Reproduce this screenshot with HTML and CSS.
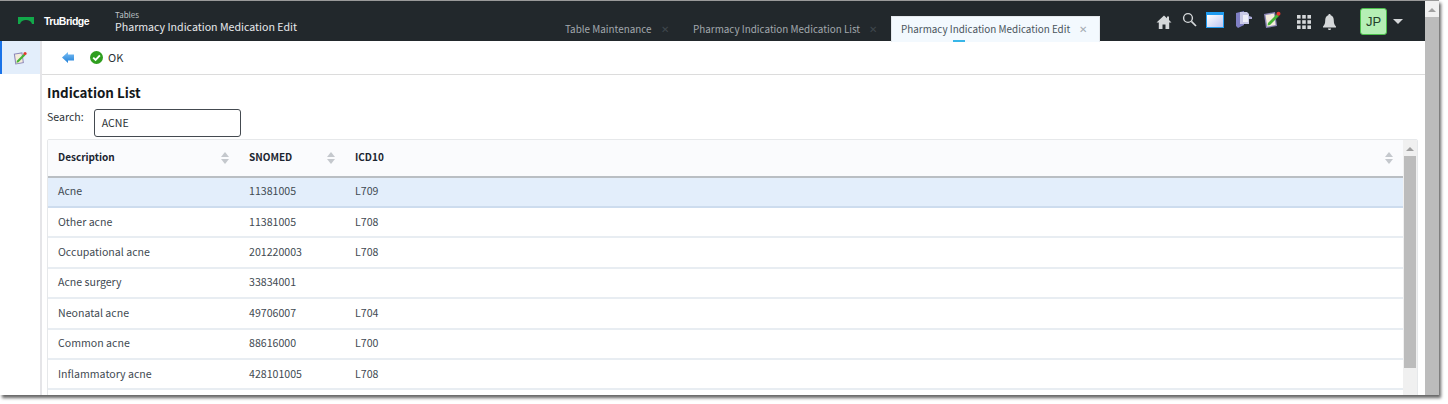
FILE: index.html
```html
<!DOCTYPE html>
<html lang="en">
<head>
<meta charset="utf-8">
<title>Pharmacy Indication Medication Edit</title>
<link rel="stylesheet" href="styles.css">
</head>
<body>
<div class="window">
  <div class="app">
    <header class="topbar">
      <div class="brand">
        <svg class="brand-mark" width="16" height="8" viewBox="0 0 16 8"><path d="M0 0H16V7H14C13 4 11 3 8 3S3 4 2 7H0Z" fill="#12a84a"/></svg>
        <span class="brand-name">TruBridge</span>
      </div>
      <div class="title">
        <div class="title-small">Tables</div>
        <div class="title-main">Pharmacy Indication Medication Edit</div>
      </div>
      <nav class="tabs">
        <div class="tab tab-first"><span>Table Maintenance</span><span class="tab-x">✕</span></div>
        <div class="tab tab-second"><span>Pharmacy Indication Medication List</span><span class="tab-x">✕</span></div>
        <div class="tab tab-active"><span>Pharmacy Indication Medication Edit</span><span class="tab-x">✕</span><i class="tab-mark"></i></div>
      </nav>
      <div class="tools">
        <svg class="ic-home" width="16" height="14" viewBox="0 0 16 14"><path d="M8 0.5L0.5 7.5H2.8V14H6.5V9.5H9.5V14H13.2V7.5H15.5L13 5.1V1.5H11V3.3Z" fill="#d5d8da"/></svg>
        <svg class="ic-search" width="15" height="15" viewBox="0 0 15 15"><circle cx="6" cy="6" r="4.4" fill="none" stroke="#d5d8da" stroke-width="1.4"/><path d="M9.4 9.4L14 14" stroke="#d5d8da" stroke-width="1.7"/></svg>
        <svg class="ic-window" width="18" height="16" viewBox="0 0 18 16"><defs><linearGradient id="wg" x1="0" y1="0" x2="1" y2="1"><stop offset="0" stop-color="#fff"/><stop offset="1" stop-color="#bcc6f2"/></linearGradient></defs><rect width="18" height="16" fill="#1f9bf0"/><rect x="1" y="3" width="16" height="12" fill="url(#wg)"/></svg>
        <svg class="ic-docs" width="18" height="17" viewBox="0 0 18 17"><path d="M1 2L9 0V14L3 17L1 15Z" fill="#7f7fc4"/><path d="M5 1H12L14 3V13H5Z" fill="#c9c9e6"/><path d="M8 4H13V11H8Z" fill="#eeeef8"/><path d="M14 5L17 6V8L14 8Z" fill="#a9a9d6"/></svg>
        <svg class="ic-edit" width="18" height="17" viewBox="0 0 18 17"><use href="#edit-shape"/></svg>
        <svg class="ic-grid" width="14" height="14" viewBox="0 0 14 14" fill="#d5d8da"><rect width="3.6" height="3.6"/><rect x="5.2" width="3.6" height="3.6"/><rect x="10.4" width="3.6" height="3.6"/><rect y="5.2" width="3.6" height="3.6"/><rect x="5.2" y="5.2" width="3.6" height="3.6"/><rect x="10.4" y="5.2" width="3.6" height="3.6"/><rect y="10.4" width="3.6" height="3.6"/><rect x="5.2" y="10.4" width="3.6" height="3.6"/><rect x="10.4" y="10.4" width="3.6" height="3.6"/></svg>
        <svg class="ic-bell" width="13" height="16" viewBox="0 0 13 16"><path d="M6.5 0C7.3 0 7.7 .6 7.7 1.3C10 2 10.8 4 10.8 6.5C10.8 9.5 11.5 11 13 12.5V13.5H0V12.5C1.5 11 2.2 9.5 2.2 6.5C2.2 4 3 2 5.3 1.3C5.3 .6 5.7 0 6.5 0Z" fill="#d5d8da"/><path d="M5 14.4H8C8 15.4 7.3 16 6.5 16S5 15.4 5 14.4Z" fill="#d5d8da"/></svg>
        <div class="avatar">JP</div>
        <svg class="ic-caret" width="10" height="5" viewBox="0 0 10 5"><path d="M0 0H10L5 5Z" fill="#d5d8da"/></svg>
      </div>
    </header>
    <div class="body">
      <aside class="sidebar">
        <div class="side-item">
          <svg width="14" height="14" viewBox="0 0 18 17"><defs><g id="edit-shape"><path d="M1 3L12 1L14 15L3 17Z" fill="#8c86b8"/><path d="M2.5 4L11 2.6L12.6 14L4.2 15.6Z" fill="#f4ecdc"/><path d="M5 12L14 3L16 5L7 14L4.5 14.5Z" fill="#46b336"/><circle cx="15.5" cy="2.8" r="2" fill="#e2372c"/></g></defs><use href="#edit-shape"/></svg>
        </div>
      </aside>
      <main class="main">
        <div class="toolbar">
          <svg class="ic-back" width="12" height="11" viewBox="0 0 12 11"><defs><linearGradient id="bg" x1="0" y1="0" x2="0" y2="1"><stop offset="0" stop-color="#7cc0f5"/><stop offset="1" stop-color="#1f7fd8"/></linearGradient></defs><path d="M0 5.5L6 0V2.5H12V8.5H6V11Z" fill="url(#bg)"/></svg>
          <svg class="ic-ok" width="13" height="13" viewBox="0 0 13 13"><circle cx="6.5" cy="6.5" r="6.5" fill="#2f9e1f"/><path d="M3.2 6.6L5.6 9L9.9 4.4" fill="none" stroke="#fff" stroke-width="1.9"/></svg>
          <span class="ok-label">OK</span>
        </div>
        <div class="content">
          <h1 class="heading">Indication List</h1>
          <div class="search">
            <label class="search-label">Search:</label>
            <div class="search-box">ACNE</div>
          </div>
          <div class="table-wrap">
            <div class="table">
              <div class="row head">
                <div class="cell">Description<span class="sort"></span></div>
                <div class="cell">SNOMED<span class="sort"></span></div>
                <div class="cell">ICD10<span class="sort"></span></div>
              </div>
              <div class="row selected"><div class="cell">Acne</div><div class="cell">11381005</div><div class="cell">L709</div></div>
              <div class="row"><div class="cell">Other acne</div><div class="cell">11381005</div><div class="cell">L708</div></div>
              <div class="row"><div class="cell">Occupational acne</div><div class="cell">201220003</div><div class="cell">L708</div></div>
              <div class="row"><div class="cell">Acne surgery</div><div class="cell">33834001</div><div class="cell"></div></div>
              <div class="row"><div class="cell">Neonatal acne</div><div class="cell">49706007</div><div class="cell">L704</div></div>
              <div class="row"><div class="cell">Common acne</div><div class="cell">88616000</div><div class="cell">L700</div></div>
              <div class="row"><div class="cell">Inflammatory acne</div><div class="cell">428101005</div><div class="cell">L708</div></div>
            </div>
            <div class="scrollbar inner-bar"><i class="arrow"></i><div class="thumb inner-thumb"></div></div>
          </div>
        </div>
      </main>
    </div>
  </div>
  <div class="scrollbar outer-bar"><i class="arrow"></i><div class="thumb outer-thumb"></div></div>
</div>
</body>
</html>
```
FILE: styles.css
```css
* { box-sizing: border-box; }
html, body { margin: 0; height: 100%; background: #fff; overflow: hidden; }
body { font-family: "Noto Sans CJK JP", "Noto Sans", sans-serif; color: #3f4a52; font-size: 10.6px; }
.window {
  display: flex;
  width: 1439px;
  height: 395px;
  border-top: 1px solid #9a9a9a;
  box-shadow: 2px 3px 3px #666;
  overflow: hidden;
  background: #fff;
}
.app { width: 1425px; display: flex; flex-direction: column; }
.topbar {
  height: 40px;
  flex: none;
  background: #22282c;
  display: flex;
  align-items: center;
  position: relative;
  z-index: 1;
}
.brand { display: flex; align-items: center; width: 115px; padding-left: 18px; }
.brand-mark { margin-right: 10px; margin-top: -1px; }
.brand-name { color: #fff; font-family: "Liberation Sans", sans-serif; font-weight: 700; font-size: 10.5px; letter-spacing: -0.5px; }
.title { width: 268px; color: #e8eaec; padding-top: 1px; }
.title-small { font-size: 8px; line-height: 9px; color: #bfc4c8; }
.title-main { font-size: 10.63px; line-height: 15px; white-space: nowrap; }
.tabs { display: flex; align-self: flex-end; height: 25px; margin-left: 182px; }
.tab { display: flex; align-items: center; color: #a3a9ae; font-size: 9.9px; position: relative; white-space: nowrap; }
.tab-x { font-size: 10px; color: #3f474c; margin-left: 9px; }
.tab-first { width: 128px; }
.tab-second { width: 198px; }
.tab-active {
  width: 209px;
  height: 26px;
  background: #f3f9fe;
  color: #4a545c;
  padding: 0 0 2px 9px;
  border: 1px solid #e4e8ec;
  border-bottom: none;
}
.tab-active .tab-x { color: #a3abb2; margin-left: 9px; }
.tab-mark { position: absolute; left: 61px; bottom: 0; width: 12px; height: 2px; background: #38b6e8; }
.tools { position: absolute; left: 1156px; top: 0; height: 40px; display: flex; align-items: center; }
.ic-home { margin-top: 1px; }
.ic-search { margin-left: 10px; margin-top: -3px; }
.ic-window { margin-left: 9px; margin-top: -3px; }
.ic-docs { margin-left: 11px; margin-top: -3px; }
.ic-edit { margin-left: 10px; margin-top: -3px; }
.ic-grid { margin-left: 16px; margin-top: 1px; }
.ic-bell { margin-left: 12px; margin-top: 1px; }
.avatar {
  width: 27px;
  height: 27px;
  margin-left: 24px;
  background: #b5efb5;
  border: 1px solid #4cc04c;
  border-radius: 3px;
  color: #24402c;
  font-family: "Liberation Sans", sans-serif;
  font-size: 13px;
  display: flex;
  align-items: center;
  justify-content: center;
}
.ic-caret { margin-left: 6px; margin-top: 1px; }
.body { flex: 1; display: flex; min-height: 0; }
.sidebar { width: 42px; flex: none; border-right: 2px solid #e5e5e8; }
.side-item {
  height: 33px;
  background: #e3eefb;
  border-left: 2px solid #1a73e8;
  display: flex;
  align-items: center;
  justify-content: center;
  padding-right: 2px;
}
.main { flex: 1; min-width: 0; display: flex; flex-direction: column; }
.toolbar {
  height: 34px;
  flex: none;
  display: flex;
  align-items: center;
  background: #fff;
  border-bottom: 1px solid #dcdcdc;
  padding-left: 20px;
}
.ic-ok { margin-left: 16px; }
.ok-label { margin-left: 5px; padding-bottom: 2px; color: #2c3236; font-size: 11px; }
.content { padding: 0 7px 0 5px; flex: 1; min-height: 0; }
.heading { margin: 7px 0 0; font-size: 13.4px; line-height: 20px; font-weight: 700; color: #14181b; }
.search { display: flex; margin-top: 7px; height: 30px; align-items: flex-start; }
.search-label { color: #2c3236; font-size: 10.6px; line-height: 16px; margin-top: 0; }
.search-box {
  width: 147px;
  height: 28px;
  margin-left: 10px;
  border: 1px solid #444a50;
  border-radius: 3px;
  padding-left: 7px;
  font-size: 10.6px;
  line-height: 26px;
  color: #2c3236;
  background: #fff;
}
.table-wrap {
  display: flex;
  width: 1371px;
  height: 300px;
  border: 1px solid #e6e8ea;
  border-radius: 2px 2px 0 0;
  overflow: hidden;
}
.table { flex: 1; min-width: 0; }
.row {
  display: grid;
  grid-template-columns: 191px 106px 1fr;
  height: 30.4px;
  border-bottom: 2px solid #e8edf2;
  align-items: center;
}
.cell { padding: 0 0 2px 10px; position: relative; height: 100%; display: flex; align-items: center; }
.head { height: 37.6px; background: #fafbfd; border-bottom: 2px solid #b9bec3; font-weight: 700; font-size: 10px; color: #1b2530; }
.selected { background: #e3eefb; border-bottom-color: #cddcee; }
.sort {
  position: absolute;
  right: 10px;
  top: 50%;
  width: 8px;
  height: 12px;
  margin-top: -6px;
}
.sort::before, .sort::after {
  content: "";
  position: absolute;
  left: 0;
  width: 0;
  height: 0;
  border: 4px solid transparent;
}
.sort::before { top: 0; border-top: none; border-bottom: 5px solid #c4c8cd; }
.sort::after { bottom: 0; border-bottom: none; border-top: 5px solid #c4c8cd; }
.scrollbar { flex: none; background: #f0f0f0; display: flex; flex-direction: column; align-items: center; }
.arrow { display: block; flex: none; width: 0; height: 0; border: 4px solid transparent; border-top: none; border-bottom: 4px solid #a0a0a0; }
.thumb { background: #bcbcbc; align-self: stretch; }
.inner-bar { width: 14px; padding-top: 7px; }
.inner-thumb { height: 212px; margin-top: 5px; margin-inline: 1px; }
.outer-bar { width: 14px; padding-top: 7px; }
.outer-thumb { flex: 1; margin-top: 5px; }
```
